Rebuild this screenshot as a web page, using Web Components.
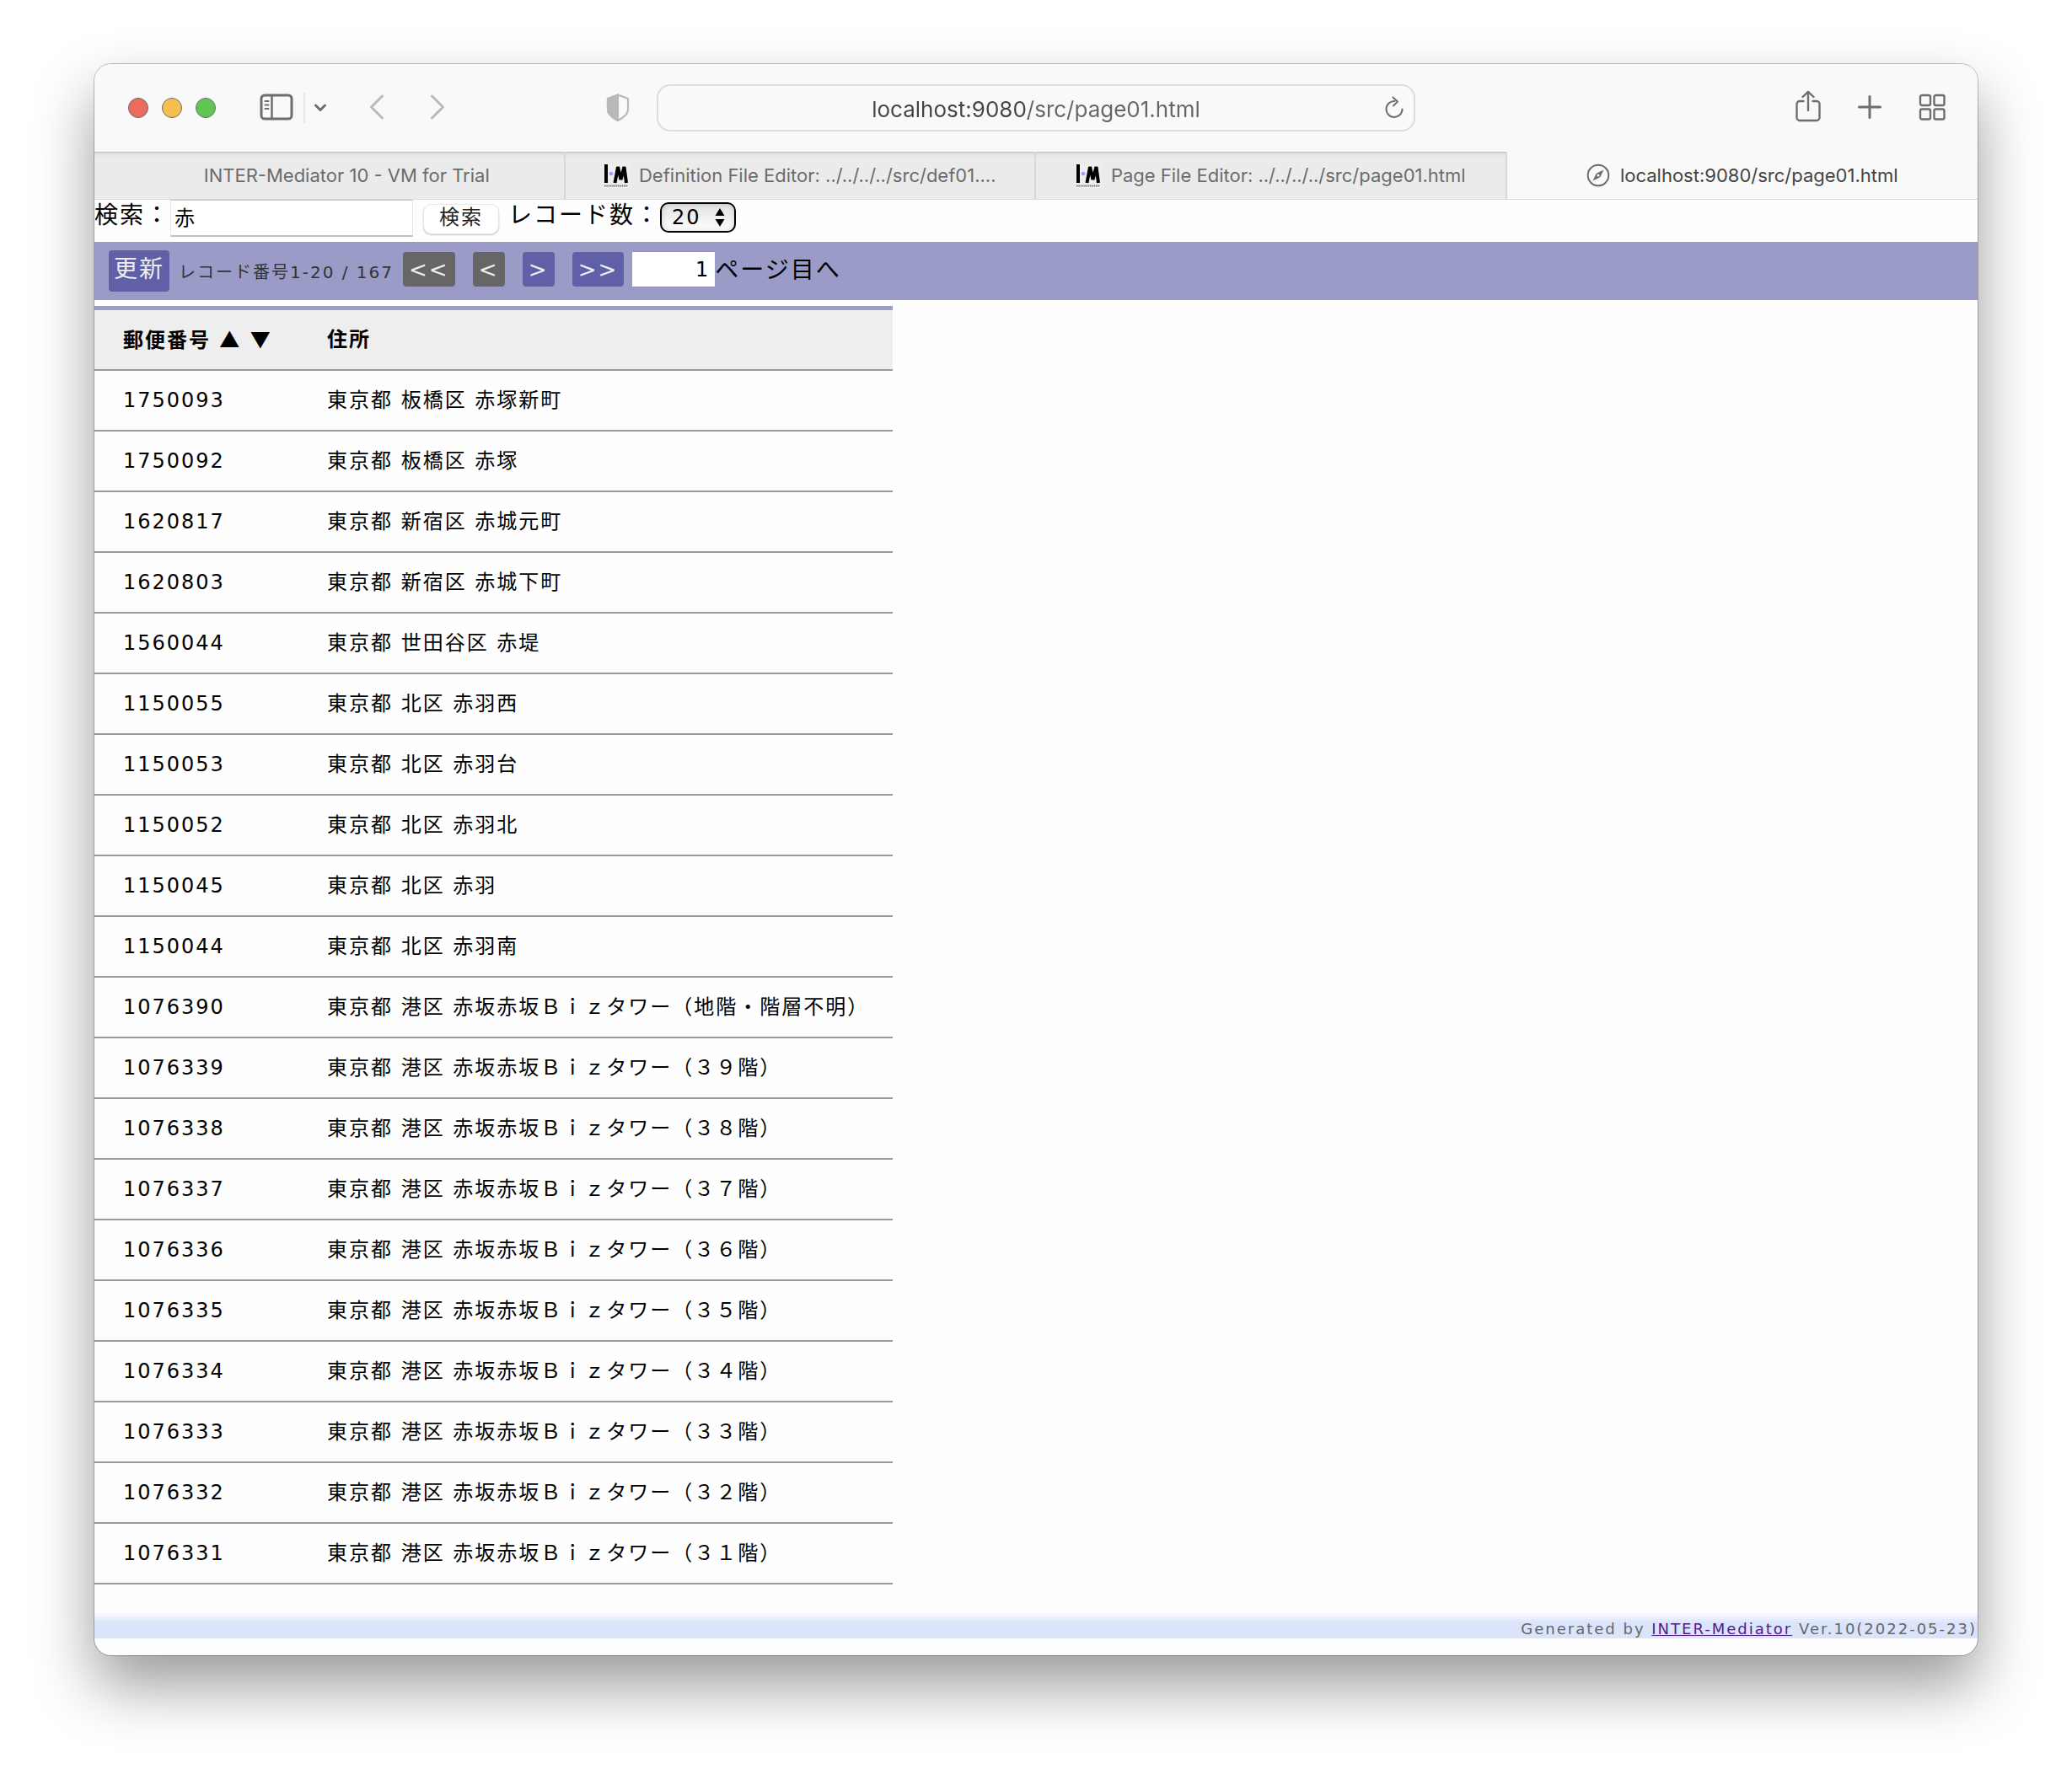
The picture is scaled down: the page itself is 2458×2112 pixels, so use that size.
<!DOCTYPE html>
<html lang="ja">
<head>
<meta charset="utf-8">
<title>localhost:9080/src/page01.html</title>
<style>
  body {
    margin: 0;
    padding: 76px 112px 148px;
    background: #fff;
    color: #000;
    font-family: "DejaVu Sans", "Noto Sans CJK JP", sans-serif;
  }
</style>
</head>
<body>
<browser-window>
  <title-bar slot="chrome" url="localhost:9080/src/page01.html"></title-bar>
  <tab-strip slot="chrome">
    <browser-tab icon="none">INTER-Mediator 10 - VM for Trial</browser-tab>
    <browser-tab icon="im">Definition File Editor: ../../../../src/def01....</browser-tab>
    <browser-tab icon="im">Page File Editor: ../../../../src/page01.html</browser-tab>
    <browser-tab icon="compass" active>localhost:9080/src/page01.html</browser-tab>
  </tab-strip>
  <search-bar></search-bar>
  <page-navigator></page-navigator>
  <postal-table></postal-table>
  <page-credit></page-credit>
</browser-window>

<script>
const define = (name, html, setup) => {
  const template = document.createElement('template');
  template.innerHTML = html;
  customElements.define(name, class extends HTMLElement {
    constructor() {
      super();
      this.attachShadow({ mode: 'open' }).append(template.content.cloneNode(true));
    }
    connectedCallback() {
      if (setup) setup(this, this.shadowRoot);
    }
  });
};

define('browser-window', `
  <style>
    :host {
      display: block;
      border-radius: 20px;
      overflow: hidden;
      background: #fefefe;
      box-shadow: 0 0 0 1px rgba(0,0,0,.24), 0 36px 72px rgba(0,0,0,.4);
    }
    main { display: block; letter-spacing: 2px; padding-bottom: 20px; }
  </style>
  <slot name="chrome"></slot>
  <main><slot></slot></main>
`);

define('title-bar', `
  <style>
    :host {
      display: grid;
      grid-template-columns: 1fr 900px 1fr;
      align-items: center;
      height: 104px;
      background: #f9f9f9;
      font-family: Inter, sans-serif;
    }
    div { display: flex; align-items: center; }
    button { display: flex; padding: 0; border: 0; background: none; color: #6e6e6e; }
    svg { display: block; fill: none; stroke: currentColor; stroke-linecap: round; stroke-linejoin: round; }
    .left { padding-left: 40px; padding-right: 32px; }
    .lights { gap: 16px; margin-right: 52px; }
    .lights button { width: 24px; height: 24px; border-radius: 50%; border: 1px solid; box-sizing: border-box; }
    .red { background: #ec6a5e; border-color: #d5574c; }
    .amber { background: #f4bf4f; border-color: #d9a23d; }
    .green { background: #61c554; border-color: #4faa40; }
    .rule { width: 2px; height: 36px; margin: 0 10px 0 12px; background: #e6e6e6; }
    .arrows { gap: 54px; margin-left: 50px; }
    .arrows button { color: #b9b9b9; }
    .shield { margin-left: auto; color: #b9b9b9; }
    .address { position: relative; box-sizing: border-box; border: 2px solid #dcdcdc; border-radius: 16px; height: 56px; }
    input {
      width: 100%;
      height: 100%;
      box-sizing: border-box;
      border: 0;
      padding: 2px 48px 0;
      text-align: center;
      font: 26px Inter, sans-serif;
      color: transparent;
      background: linear-gradient(90deg, #444 49%, #666 49%);
      -webkit-background-clip: text;
      background-clip: text;
    }
    .reload { position: absolute; right: 11px; }
    .right { justify-content: flex-end; gap: 44px; padding: 0 38px 2px 0; }
  </style>
  <div class="left">
    <div class="lights">
      <button class="red" aria-label="Close"></button>
      <button class="amber" aria-label="Minimize"></button>
      <button class="green" aria-label="Zoom"></button>
    </div>
    <button aria-label="Sidebar"><svg width="40" height="34" viewBox="0 0 40 34" stroke-width="3"><rect x="2" y="2" width="36" height="28" rx="4"/><path d="M14.500 2V30" stroke-width="2.500"/><path d="M6.500 9h4M6.500 13.500h4M6.500 18h4" stroke-width="2"/></svg></button>
    <span class="rule"></span>
    <button aria-label="Tab groups"><svg width="16" height="12" viewBox="0 0 16 12" stroke-width="3"><path d="M2.500 3L8 8.500L13.500 3"/></svg></button>
    <div class="arrows">
      <button aria-label="Back"><svg width="18" height="32" viewBox="0 0 18 32" stroke-width="3"><path d="M15.500 2L2.500 15L15.500 28"/></svg></button>
      <button aria-label="Forward"><svg width="18" height="32" viewBox="0 0 18 32" stroke-width="3"><path d="M2.500 2L15.500 15L2.500 28"/></svg></button>
    </div>
    <button class="shield" aria-label="Privacy report"><svg width="28" height="34" viewBox="0 0 28 34" stroke-width="2.200"><path d="M14 1.500L26 6V19C26 25 21 28.500 14 32C7 28.500 2 25 2 19V6Z"/><path d="M14 1.500V32C7 28.500 2 25 2 19V6Z" fill="currentColor"/></svg></button>
  </div>
  <div class="address">
    <input type="text" aria-label="Address">
    <button class="reload" aria-label="Reload"><svg width="24" height="28" viewBox="0 0 24 28" stroke-width="2"><path d="M12.500 6A9.500 9.500 0 1 0 21.500 15.500"/><path d="M10.500 1.500L16 6.500L11 11.500"/></svg></button>
  </div>
  <div class="right">
    <button aria-label="Share"><svg width="30" height="40" viewBox="0 0 30 40" stroke-width="2.400"><path d="M9.500 13H5a3.500 3.500 0 0 0-3.500 3.500v16A3.500 3.500 0 0 0 5 36h20a3.500 3.500 0 0 0 3.500-3.500v-16A3.500 3.500 0 0 0 25 13h-4.500"/><path d="M15 24V2M8.500 8L15 1.800L21.500 8"/></svg></button>
    <button aria-label="New tab"><svg width="28" height="28" viewBox="0 0 28 28" stroke-width="3"><path d="M14 1.500V26.500M1.500 14H26.500"/></svg></button>
    <button aria-label="Tab overview"><svg width="32" height="32" viewBox="0 0 32 32" stroke-width="2.400"><rect x="2" y="2" width="12" height="12" rx="2"/><rect x="18.500" y="2" width="12" height="12" rx="2"/><rect x="2" y="18.500" width="12" height="12" rx="2"/><rect x="18.500" y="18.500" width="12" height="12" rx="2"/></svg></button>
  </div>
`, (host, root) => {
  root.querySelector('input').value = host.getAttribute('url');
});

define('tab-strip', `
  <style>
    :host { display: grid; grid-auto-flow: column; grid-auto-columns: 1fr; height: 57px; border-bottom: 1px solid #d8d8d8; box-sizing: border-box; background: #f9f9f9; }
  </style>
  <slot></slot>
`);

define('browser-tab', `
  <style>
    :host {
      display: flex;
      align-items: center;
      justify-content: center;
      gap: 12px;
      box-sizing: border-box;
      min-width: 0;
      background: linear-gradient(#c8c8c8 0 1px, #e2e2e2 2px, #ebebeb 7px);
      border-right: 2px solid #d8d8d8;
      color: #6b6b6b;
      font-family: Inter, sans-serif;
      font-size: 22px;
      line-height: 28px;
      white-space: nowrap;
    }
    :host([active]) { background: #f9f9f9; border-right: 0; color: #444; }
    :host([icon="none"]) { padding-left: 42px; }
    svg { display: none; flex: none; }
    :host([icon="im"]) .im, :host([icon="compass"]) .compass { display: block; }
  </style>
  <svg class="im" width="30" height="30" viewBox="0 0 30 30"><rect width="30" height="30" fill="#eee"/><rect x="1" y="2" width="4" height="22"/><circle cx="9" cy="13" r="2.300" fill="#9c9cff"/><path d="M13.500 24L17 5L20.500 20L24.500 5L27 24" fill="none" stroke="#000" stroke-width="4"/><path d="M1 27.500H29" stroke="#777" stroke-width="2" stroke-dasharray="1.500 .8"/></svg>
  <svg class="compass" width="28" height="28" viewBox="0 0 28 28" fill="none" stroke="#6b6b6b" stroke-width="2"><circle cx="14" cy="14" r="12.300"/><path d="M20.500 7.500L16.200 16.200L7.500 20.500L11.800 11.800Z" fill="#6b6b6b" stroke="none"/><circle cx="14" cy="14" r="1.600" fill="#f9f9f9" stroke="none"/></svg>
  <slot></slot>
`);

define('search-bar', `
  <style>
    :host { display: flex; align-items: flex-start; height: 50px; font-size: 28px; line-height: 38px; }
    input, button, select { font: 24px/32px "DejaVu Sans", "Noto Sans CJK JP", sans-serif; letter-spacing: inherit; color: #000; box-sizing: border-box; }
    input { width: 288px; height: 44px; padding: 0 4px 4px; border: 1px solid #e6e6e6; border-top-color: #c4c4c4; border-bottom: 2px solid #c0c0c0; background: #fff; }
    button { height: 36px; margin: 5px 11px 0 12px; padding: 0 18px 4px; border: 1px solid #e6e6e6; border-radius: 10px; background: #fff; color: #222; box-shadow: 0 1px 2px rgba(0,0,0,.24); line-height: 30px; }
    .select { display: grid; align-items: center; margin-top: 3px; }
    .select > * { grid-area: 1 / 1; }
    select { appearance: none; width: 90px; height: 36px; padding: 0 12px 2px; border: 2px solid #000; border-radius: 10px; background: linear-gradient(#e2e2e2, #fff); box-shadow: inset 0 0 6px rgba(0,0,0,.16); }
    svg { justify-self: end; margin-right: 13px; pointer-events: none; }
  </style>
  <label for="q">検索：</label>
  <input id="q" type="text" value="赤">
  <button type="button">検索</button>
  <label for="n">レコード数：</label>
  <span class="select">
    <select id="n"><option>10</option><option selected>20</option><option>50</option></select>
    <svg width="12" height="24" viewBox="0 0 12 24"><path d="M6 1L11.500 10H.5ZM6 23L.5 14H11.500Z"/></svg>
  </span>
`);

define('nav-button', `
  <style>
    :host { display: block; font-size: 26px; }
    button { display: block; min-width: 38px; height: 41px; padding: 0 7px; border: 0; border-radius: 4px; background: #6060a8; color: #eee; font: inherit; letter-spacing: inherit; line-height: 40px; }
    :host([off]) button { background: #666; }
    :host([large]) { font-size: 28px; }
    :host([large]) button { height: 49px; padding: 0 6px 4px; }
  </style>
  <button type="button"><slot></slot></button>
`);

define('page-navigator', `
  <style>
    :host { display: flex; align-items: center; height: 69px; padding-left: 17px; background: #9b9bc8; font-size: 28px; }
    .count { margin: 0 11px; font-size: 20px; color: #333; }
    .pager { display: flex; align-items: center; padding-bottom: 4px; }
    .moves { display: flex; gap: 21px; margin-right: 10px; }
    input { width: 98px; height: 43px; box-sizing: border-box; padding: 0 6px; border: 1px solid #9090b8; border-width: 1px 0; background: #fff; font: 24px "DejaVu Sans", sans-serif; letter-spacing: inherit; text-align: right; }
    label { padding-bottom: 4px; }
  </style>
  <nav-button large>更新</nav-button>
  <span class="count">レコード番号1-20 / 167</span>
  <div class="pager">
    <div class="moves">
      <nav-button off>&lt;&lt;</nav-button>
      <nav-button off>&lt;</nav-button>
      <nav-button>&gt;</nav-button>
      <nav-button>&gt;&gt;</nav-button>
    </div>
    <input id="page" type="text" value="1">
    <label for="page">ページ目へ</label>
  </div>
`);

const tower = floor => `東京都 港区 赤坂赤坂Ｂｉｚタワー（${floor}）`;
const records = [
  ['1750093', '東京都 板橋区 赤塚新町'],
  ['1750092', '東京都 板橋区 赤塚'],
  ['1620817', '東京都 新宿区 赤城元町'],
  ['1620803', '東京都 新宿区 赤城下町'],
  ['1560044', '東京都 世田谷区 赤堤'],
  ['1150055', '東京都 北区 赤羽西'],
  ['1150053', '東京都 北区 赤羽台'],
  ['1150052', '東京都 北区 赤羽北'],
  ['1150045', '東京都 北区 赤羽'],
  ['1150044', '東京都 北区 赤羽南'],
  ['1076390', tower('地階・階層不明')],
  ['1076339', tower('３９階')],
  ['1076338', tower('３８階')],
  ['1076337', tower('３７階')],
  ['1076336', tower('３６階')],
  ['1076335', tower('３５階')],
  ['1076334', tower('３４階')],
  ['1076333', tower('３３階')],
  ['1076332', tower('３２階')],
  ['1076331', tower('３１階')],
];

define('postal-table', `
  <style>
    :host { display: block; padding: 7px 0 34px; font-size: 24px; line-height: 36px; }
    table { border-spacing: 0; border-top: 5px solid #9b9bc8; }
    th, td { height: 70px; padding: 0 28px 0 34px; border-bottom: 2px solid #999; text-align: left; white-space: nowrap; }
    th:first-child { min-width: 180px; }
    th { background: #eee; }
    .sort { font-family: "Noto Sans CJK JP", sans-serif; }
  </style>
  <table>
    <thead><tr><th>郵便番号 <span class="sort">▲</span> <span class="sort">▼</span></th><th>住所</th></tr></thead>
    <tbody></tbody>
  </table>
`, (host, root) => {
  root.querySelector('tbody').innerHTML =
    records.map(([code, address]) => `<tr><td>${code}</td><td>${address}</td></tr>`).join('');
});

define('page-credit', `
  <style>
    :host { display: block; padding: 8px 1px 0 0; background: linear-gradient(#f5f7fe 0 4px, #ecf1fd 4px 7px, #e3eafc 7px 10px, #dae4fb 10px); color: #666; font-size: 18px; line-height: 22px; text-align: right; }
    a { color: #551a8b; }
  </style>
  Generated by <a href="#">INTER-Mediator</a> Ver.10(2022-05-23)
`);
</script>
</body>
</html>
